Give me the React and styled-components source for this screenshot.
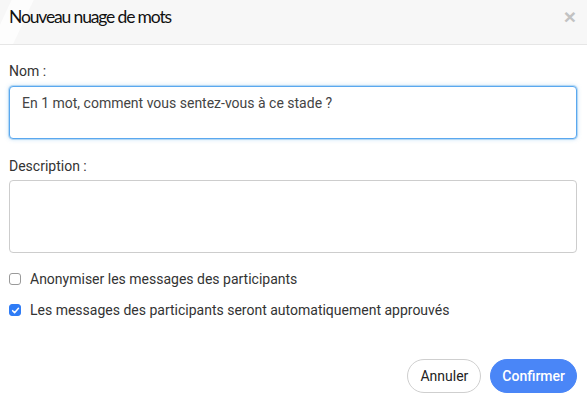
import React from "react";
import styled, { createGlobalStyle } from "styled-components";

const Global = createGlobalStyle`
  html, body { margin: 0; padding: 0; background: #fff; }
  body { font-family: Roboto, "Liberation Sans", Arial, sans-serif; color: #333; }
  * { box-sizing: border-box; }
`;

const Modal = styled.div`
  width: 587px;
  height: 402px;
  background: #fff;
  display: flex;
  flex-direction: column;
`;

const Header = styled.div`
  height: 45px;
  display: flex;
  align-items: flex-start;
  justify-content: space-between;
  padding: 6px 11px 0 9px;
  border-bottom: 1px solid #e6e6e6;
  background:
    linear-gradient(115deg, rgba(255,255,255,0) 0px, rgba(255,255,255,0) 10px, rgba(255,255,255,0.8) 11px, rgba(255,255,255,0.8) 30px, rgba(255,255,255,0) 31px),
    linear-gradient(115deg, #f7f7f7 0, #f7f7f7 100%);
`;

const Title = styled.h4`
  margin: 0;
  font-family: Lato, "Open Sans", sans-serif;
  font-weight: 400;
  font-size: 17.5px;
  letter-spacing: -1.15px;
  line-height: 22px;
  color: #111;
`;

const Close = styled.span`
  font-family: "Liberation Sans", Arial, sans-serif;
  font-weight: 700;
  font-size: 21px;
  line-height: 20px;
  color: #c2c2c2;
  margin-top: 1px;
`;

const Body = styled.div`
  flex: 1;
  display: flex;
  flex-direction: column;
  padding: 16px 10px 0 9px;
`;

const Label = styled.label`
  display: block;
  font-size: 14px;
  line-height: 20px;
  margin-bottom: ${(p) => p.$mb || 5}px;
  color: #333;
`;

const Field = styled.textarea`
  display: block;
  width: 100%;
  height: ${(p) => p.$h}px;
  resize: none;
  font-family: Roboto, "Liberation Sans", Arial, sans-serif;
  font-size: 14px;
  line-height: 20px;
  color: #444;
  padding: 6px 12px;
  border-radius: 4px;
  outline: none;
  margin: 0 0 ${(p) => p.$mb || 0}px 0;
  border: 1px solid ${(p) => (p.$focus ? "#5aa8ef" : "#cdcdcd")};
  box-shadow: ${(p) => (p.$focus ? "0 0 0 1px rgba(102,175,233,0.35), 0 0 4px rgba(102,175,233,0.5)" : "none")};
`;

const CheckRow = styled.div`
  display: flex;
  align-items: center;
  height: 20px;
  gap: 9px;
  font-size: 14px;
  color: #333;
  margin-bottom: 11px;
`;

const Box = styled.span`
  width: 12px;
  height: 12px;
  border-radius: 3px;
  flex: none;
  display: flex;
  align-items: center;
  justify-content: center;
  background: ${(p) => (p.$checked ? "#2f7cf6" : "#fff")};
  border: 1px solid ${(p) => (p.$checked ? "#2f7cf6" : "#9a9a9a")};
`;

const Footer = styled.div`
  margin-top: auto;
  display: flex;
  justify-content: flex-end;
  gap: 9px;
  padding-bottom: 9px;
`;

const Button = styled.button`
  height: 34px;
  border-radius: 17px;
  font-family: Roboto, "Liberation Sans", Arial, sans-serif;
  font-size: 14px;
  font-weight: ${(p) => (p.$primary ? 500 : 400)};
  padding: 0 ${(p) => (p.$primary ? 11 : 12)}px;
  background: ${(p) => (p.$primary ? "#4a86f7" : "#fff")};
  color: ${(p) => (p.$primary ? "#fff" : "#222")};
  border: 1px solid ${(p) => (p.$primary ? "#4a86f7" : "#cfcfcf")};
`;

function Check({ checked, children }) {
  return (
    <CheckRow>
      <Box $checked={checked}>
        {checked && (
          <svg width="9" height="9" viewBox="0 0 10 10">
            <path d="M1.8 5.2 L4 7.4 L8.3 2.6" fill="none" stroke="#fff" strokeWidth="1.7" strokeLinecap="round" strokeLinejoin="round" />
          </svg>
        )}
      </Box>
      <span>{children}</span>
    </CheckRow>
  );
}

export default function App() {
  return (
    <>
      <Global />
      <Modal>
        <Header>
          <Title>Nouveau nuage de mots</Title>
          <Close>×</Close>
        </Header>
        <Body>
          <Label>Nom :</Label>
          <Field $h={53} $focus $mb={17} defaultValue="En 1 mot, comment vous sentez-vous à ce stade ?" />
          <Label $mb={4}>Description :</Label>
          <Field $h={73} $mb={16} defaultValue="" />
          <Check>Anonymiser les messages des participants</Check>
          <Check checked>Les messages des participants seront automatiquement approuvés</Check>
          <Footer>
            <Button>Annuler</Button>
            <Button $primary>Confirmer</Button>
          </Footer>
        </Body>
      </Modal>
    </>
  );
}
